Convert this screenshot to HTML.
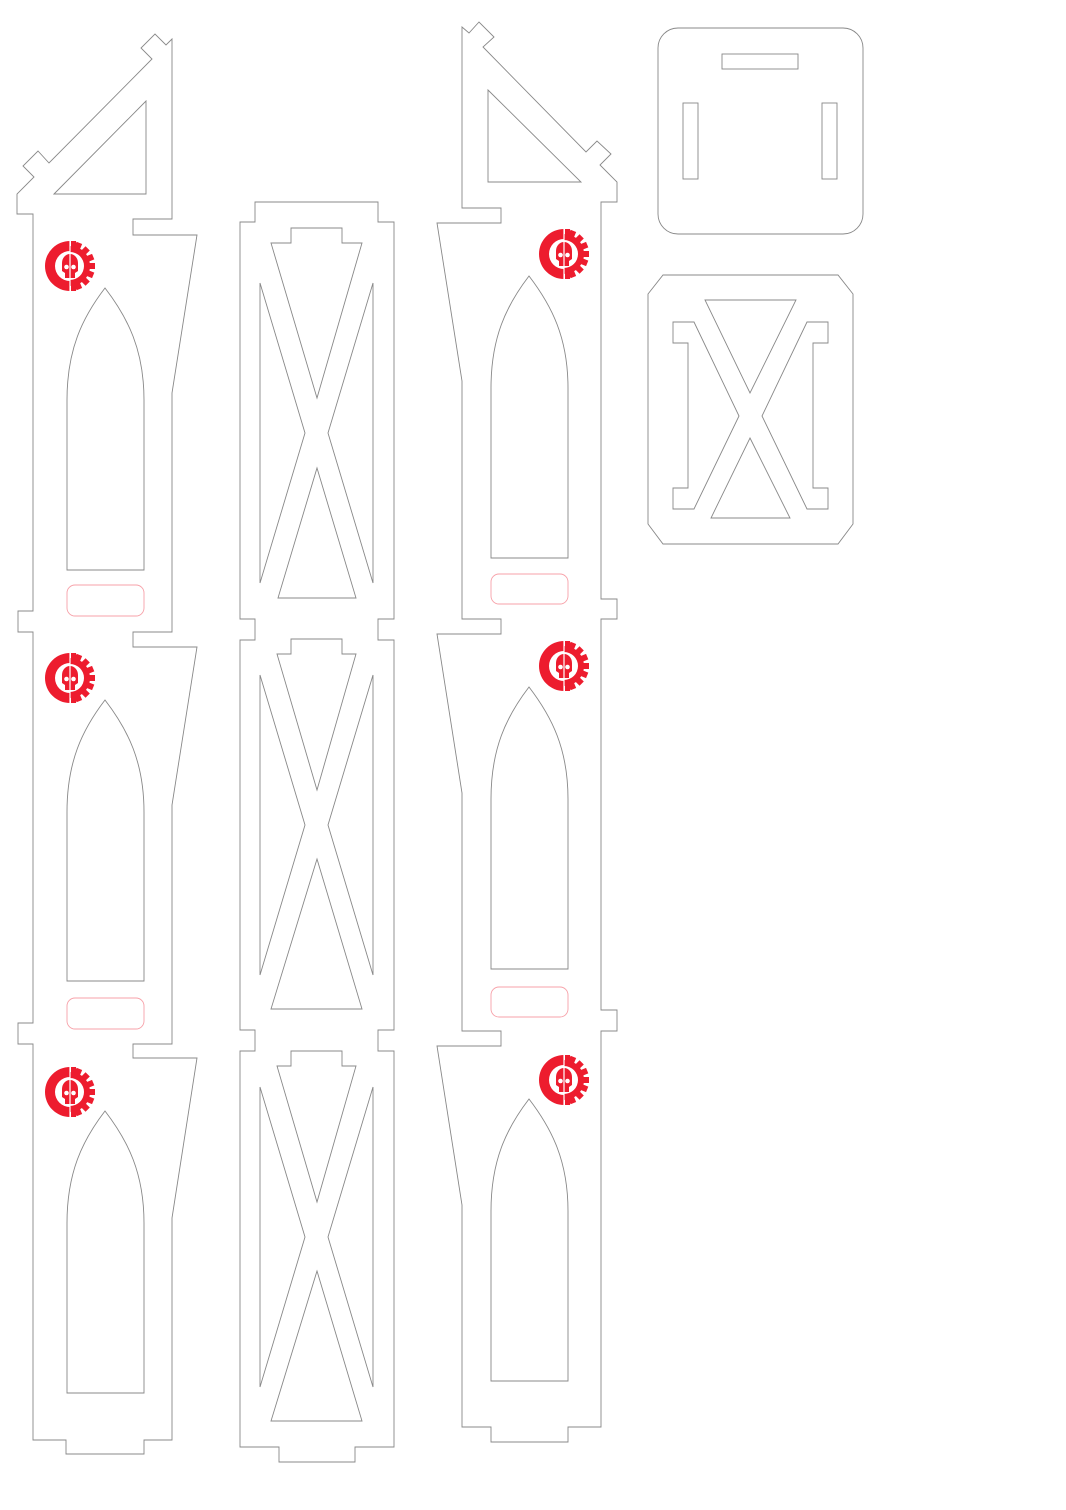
<!DOCTYPE html>
<html><head><meta charset="utf-8"><style>html,body{margin:0;padding:0;background:#fff}svg{display:block}</style></head>
<body>
<svg width="1066" height="1510" viewBox="0 0 1066 1510" xmlns="http://www.w3.org/2000/svg">
<defs>
<g id="logo">
  <path d="M0,-25 A25,25 0 0 0 0,25 V15 A15,15 0 0 1 0,-15 Z" fill="#ed1c2e"/>
  <path d="M0,-20 A20,20 0 0 1 0,20 V14 A14,14 0 0 0 0,-14 Z" fill="#ed1c2e"/>
  <g fill="#ed1c2e">
    <rect x="1" y="-25" width="5" height="6"/>
    <rect x="1" y="19" width="5" height="6"/>
    <rect x="19" y="-3" width="6" height="6"/>
    <rect x="-3" y="-25" width="6" height="6" transform="rotate(45)"/>
    <rect x="-3" y="-25" width="6" height="6" transform="rotate(135)"/>
    <rect x="-3" y="-25" width="6" height="6" transform="rotate(22)"/>
    <rect x="-3" y="-25" width="6" height="6" transform="rotate(68)"/>
    <rect x="-3" y="-25" width="6" height="6" transform="rotate(112)"/>
    <rect x="-3" y="-25" width="6" height="6" transform="rotate(158)"/>
  </g>
  <path d="M-8,-3 A8,9 0 0 1 8,-3 V5 L5,7 V12 H-5 V7 L-8,5 Z" fill="#ed1c2e"/>
  <circle cx="-3.5" cy="1" r="2.3" fill="#fff"/>
  <circle cx="3.5" cy="1" r="2.3" fill="#fff"/>
  <rect x="-0.6" y="-25" width="1.2" height="50" fill="#fff"/>
</g>
</defs>
<g fill="none" stroke="#888" stroke-width="0.9">
<path d="M17,214 V194 L34,177 L23,166 L38,151 L49,163 L152,59 L141,48 L155,34 L166,45 L172,39 V219 H133 V235 H197 L172,393 V632 H133 V647 H197 L172,805 V1044 H133 V1058 H197 L172,1218 V1440 H144 V1454 H66 V1440 H33 V1044 H18 V1023 H33 V632 H18 V611 H33 V214 Z"/>
<path d="M54,194 L146,101 V194 Z"/>
<path d="M67,570 V400 C67,350 82,318 105,288 C128,318 144,350 144,400 V570 Z"/>
<path d="M67,981 V812 C67,762 82,730 105,700 C128,730 144,762 144,812 V981 Z"/>
<path d="M67,1393 V1223 C67,1173 82,1141 105,1111 C128,1141 144,1173 144,1223 V1393 Z"/>
<path d="M462,27 L469,33 L479,22 L494,37 L483,47 L586,152 L597,141 L611,154 L600,165 L617,182 V202 H601 V599 H617 V619 H601 V1010 H617 V1031 H601 V1427 H568 V1442 H491 V1427 H462 V1205 L437,1046 H501 V1031 H462 V793 L437,634 H501 V619 H462 V381 L437,223 H501 V208 H462 Z"/>
<path d="M488,90 V182 H581 Z"/>
<path d="M491,558 V388 C491,338 506,306 529,276 C552,306 568,338 568,388 V558 Z"/>
<path d="M491,969 V799 C491,749 506,717 529,687 C552,717 568,749 568,799 V969 Z"/>
<path d="M491,1381 V1211 C491,1161 506,1129 529,1099 C552,1129 568,1161 568,1211 V1381 Z"/>
<path d="M255,202 H378 V222 H394 V619 H378 V640 H394 V1030 H378 V1051 H394 V1447 H355 V1462 H279 V1447 H240 V1051 H255 V1030 H240 V640 H255 V619 H240 V222 H255 Z"/>
<path d="M271,243 H291 V228 H342 V243 H362 L317,398 Z"/>
<path d="M260,283 L305,433 L260,583 Z"/><path d="M373,283 L328,433 L373,583 Z"/>
<path d="M317,468 L356,598 H278 Z"/>
<path d="M277,654 H291 V639 H342 V654 H356 L317,790 Z"/>
<path d="M260,675 L305,825 L260,975 Z"/><path d="M373,675 L328,825 L373,975 Z"/>
<path d="M317,859 L362,1009 H271 Z"/>
<path d="M277,1066 H291 V1051 H342 V1066 H356 L317,1202 Z"/>
<path d="M260,1087 L305,1237 L260,1387 Z"/><path d="M373,1087 L328,1237 L373,1387 Z"/>
<path d="M317,1271 L362,1421 H271 Z"/>
<rect x="658" y="28" width="205" height="206" rx="20"/>
<rect x="722" y="54" width="76" height="15"/>
<rect x="683" y="103" width="15" height="76"/>
<rect x="822" y="103" width="15" height="76"/>
<path d="M663,275 H838 L853,294 V524 L838,544 H663 L648,524 V294 Z"/>
<path d="M705,300 H796 L750,393 Z"/>
<path d="M750,438 L790,518 H711 Z"/>
<path d="M673,322 H694 L739,416 L694,509 H673 V488 H688 V343 H673 Z"/>
<path d="M828,322 H807 L762,416 L807,509 H828 V488 H813 V343 H828 Z"/>
</g>
<g fill="none" stroke="#f7a0a8" stroke-width="0.9">
<rect x="67" y="585" width="77" height="31" rx="8"/>
<rect x="67" y="998" width="77" height="31" rx="8"/>
<rect x="491" y="574" width="77" height="30" rx="8"/>
<rect x="491" y="987" width="77" height="30" rx="8"/>
</g>
<use href="#logo" transform="translate(70,266)"/>
<use href="#logo" transform="translate(70,678)"/>
<use href="#logo" transform="translate(70,1092)"/>
<use href="#logo" transform="translate(564,254)"/>
<use href="#logo" transform="translate(564,666)"/>
<use href="#logo" transform="translate(564,1080)"/>
</svg>
</body></html>
